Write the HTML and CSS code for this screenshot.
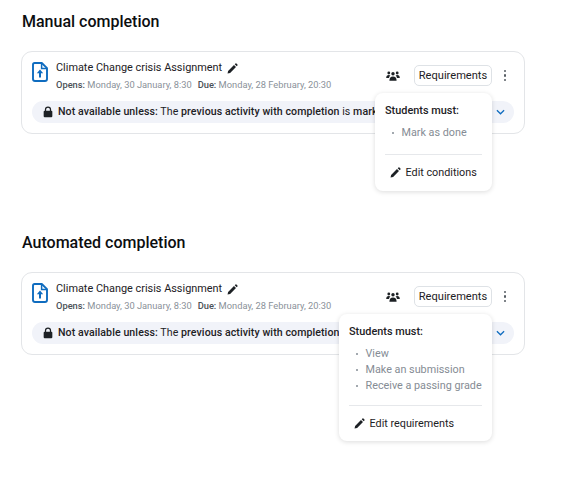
FILE: index.html
```html
<!DOCTYPE html>
<html lang="en">
<head>
<meta charset="utf-8">
<title>Completion</title>
<link rel="stylesheet" href="styles.css">
</head>
<body>
<svg class="defs" width="0" height="0" aria-hidden="true">
  <symbol id="pencil" viewBox="0 0 12 12"><path d="M0.6 11.4 L1.2 8.6 L7.6 2.2 L9.8 4.4 L3.4 10.8 Z M8.4 1.4 L9.3 0.6 Q9.8 0.2 10.3 0.6 L11.4 1.7 Q11.8 2.2 11.4 2.7 L10.6 3.6 Z" fill="currentColor"/></symbol>
  <symbol id="file" viewBox="0 0 16 20"><path d="M2.6 1 H9.8 L15 6.2 V17 Q15 19 13 19 H3 Q1 19 1 17 V2.8 Q1 1 2.6 1 Z" fill="none" stroke="currentColor" stroke-width="1.9" stroke-linejoin="round"/><path d="M9.6 1 V6.4 H15" fill="none" stroke="currentColor" stroke-width="1.5"/><path d="M8 7.6 L11.2 11.2 H9 V15.4 H7 V11.2 H4.8 Z" fill="currentColor"/></symbol>
  <symbol id="lock" viewBox="0 0 12 14"><path d="M3 6 V4 Q3 1 6 1 Q9 1 9 4 V6" fill="none" stroke="currentColor" stroke-width="1.5"/><rect x="0.8" y="5.6" width="10.4" height="7.8" rx="1.2" fill="currentColor"/></symbol>
  <symbol id="people" viewBox="0 0 14 11"><g fill="currentColor"><circle cx="2.8" cy="2" r="1.4"/><circle cx="11.2" cy="2" r="1.4"/><circle cx="7" cy="2.8" r="1.7"/><path d="M0.2 7 Q0.2 4 2.8 4 Q3.8 4 4.4 4.6 Q3.3 5.4 3 7 Z M13.8 7 Q13.8 4 11.2 4 Q10.2 4 9.6 4.6 Q10.7 5.4 11 7 Z"/><path d="M3.4 9.8 Q3.4 5.4 7 5.4 Q10.6 5.4 10.6 9.8 Z"/></g></symbol>
  <symbol id="chevron" viewBox="0 0 10 6"><path d="M1 1 L5 5 L9 1" fill="none" stroke="currentColor" stroke-width="1.4"/></symbol>
</svg>

<main class="page">
  <section class="block">
    <h2 class="heading">Manual completion</h2>
    <div class="card">
      <div class="top">
        <svg class="file"><use href="#file"/></svg>
        <div class="info">
          <div class="name">Climate Change crisis Assignment <svg class="name-pencil"><use href="#pencil"/></svg></div>
          <div class="dates"><span><b>Opens:</b> Monday, 30 January, 8:30</span><span><b>Due:</b> Monday, 28 February, 20:30</span></div>
        </div>
        <svg class="people"><use href="#people"/></svg>
        <button class="req">Requirements</button>
        <span class="more"><i></i><i></i><i></i></span>
      </div>
      <div class="pill">
        <svg class="lock"><use href="#lock"/></svg>
        <span class="pill-text"><b>Not available unless:</b> The <b>previous activity with completion</b> is <b>marked complete</b></span>
        <svg class="chevron"><use href="#chevron"/></svg>
      </div>
      <div class="pop pop-manual">
        <div class="pop-title">Students must:</div>
        <ul class="pop-list"><li>Mark as done</li></ul>
        <div class="pop-edit"><svg class="edit-pencil"><use href="#pencil"/></svg>Edit conditions</div>
      </div>
    </div>
  </section>

  <section class="block">
    <h2 class="heading">Automated completion</h2>
    <div class="card">
      <div class="top">
        <svg class="file"><use href="#file"/></svg>
        <div class="info">
          <div class="name">Climate Change crisis Assignment <svg class="name-pencil"><use href="#pencil"/></svg></div>
          <div class="dates"><span><b>Opens:</b> Monday, 30 January, 8:30</span><span><b>Due:</b> Monday, 28 February, 20:30</span></div>
        </div>
        <svg class="people"><use href="#people"/></svg>
        <button class="req">Requirements</button>
        <span class="more"><i></i><i></i><i></i></span>
      </div>
      <div class="pill">
        <svg class="lock"><use href="#lock"/></svg>
        <span class="pill-text"><b>Not available unless:</b> The <b>previous activity with completion</b> is <b>marked complete</b></span>
        <svg class="chevron"><use href="#chevron"/></svg>
      </div>
      <div class="pop pop-auto">
        <div class="pop-title">Students must:</div>
        <ul class="pop-list"><li>View</li><li>Make an submission</li><li>Receive a passing grade</li></ul>
        <div class="pop-edit"><svg class="edit-pencil"><use href="#pencil"/></svg>Edit requirements</div>
      </div>
    </div>
  </section>
</main>
</body>
</html>
```

FILE: styles.css
```css
* { box-sizing: border-box; }
html, body { margin: 0; background: #fff; }
body { font-family: Roboto, "Liberation Sans", sans-serif; color: #1d2125; overflow: hidden; }
.defs { position: absolute; }
.page { width: 566px; height: 482px; padding: 12px 41px 0 21px; display: flex; flex-direction: column; gap: 99px; }
.block { display: flex; flex-direction: column; gap: 20px; }
.heading { margin: 0; font-size: 16px; line-height: 19px; font-weight: 500; color: #0c0e10; padding-left: 1px; }
.card { position: relative; height: 83px; border: 1px solid #e3e5e8; border-radius: 11px; padding: 9px 10px 0; background: #fff; }
.top { display: flex; align-items: flex-start; height: 40px; }
.file { width: 16px; height: 20px; color: #0f6cbf; margin-top: 1px; flex: none; }
.info { margin-left: 8px; width: 290px; flex: none; }
.name { font-size: 10.9px; line-height: 14px; color: #1d2125; white-space: nowrap; display: flex; align-items: center; gap: 3px; }
.name-pencil { width: 11px; height: 11px; color: #1d2125; margin-left: 2px; }
.dates { margin-top: 3px; font-size: 9.3px; line-height: 13px; color: #8a9199; display: flex; gap: 6px; white-space: nowrap; }
.dates b { font-weight: 500; color: #4a5056; }
.people { width: 14px; height: 11px; margin: 10px 0 0 40px; color: #1d2125; flex: none; }
.req { margin: 4px 0 0 14px; width: 78px; height: 21px; padding: 0; border: 1px solid #dee2e6; border-radius: 5px; background: #fff; font: 400 11.1px/19px Roboto, "Liberation Sans", sans-serif; color: #1d2125; flex: none; }
.more { margin: 9px 0 0 12px; display: flex; flex-direction: column; gap: 2px; flex: none; }
.more i { display: block; width: 2.4px; height: 2.4px; border-radius: 50%; background: #565c63; }
.pill { height: 22px; background: #f1f3f9; border-radius: 11px; display: flex; align-items: center; padding: 0 9px 0 11px; }
.lock { width: 10px; height: 12px; color: #1d2125; flex: none; }
.pill-text { margin-left: 5px; flex: 1; font-size: 10.6px; line-height: 14px; white-space: nowrap; overflow: hidden; color: #1d2125; letter-spacing: .08px; }
.pill-text b { font-weight: 500; }
.chevron { width: 9px; height: 6px; color: #0f6cbf; flex: none; margin-left: 4px; }
.pop { position: absolute; right: 32px; background: #fff; border-radius: 8px; box-shadow: 0 1px 5px rgba(0, 0, 0, .14); padding: 11px 10px 0; z-index: 2; }
.pop-manual { top: 41px; width: 117px; height: 98px; }
.pop-auto { top: 41px; width: 153px; height: 127px; }
.pop-title { font-size: 10.9px; line-height: 14px; font-weight: 500; color: #1d2125; }
.pop-list { list-style: none; margin: 7px 0 0; padding: 0 0 11px 16.5px; border-bottom: 1px solid #e6e8eb; }
.pop-manual .pop-list { padding-bottom: 13px; }
.pop-list li { position: relative; font-size: 10.8px; line-height: 16px; color: #858c94; white-space: nowrap; }
.pop-list li::before { content: ""; position: absolute; left: -10px; top: 7px; width: 2px; height: 2px; border-radius: 50%; background: #858c94; }
.pop-edit { margin-top: 10.5px; padding-left: 5px; display: flex; align-items: center; gap: 4.5px; font-size: 10.8px; line-height: 14px; color: #1d2125; }
.edit-pencil { width: 11px; height: 11px; color: #1d2125; flex: none; }
```
